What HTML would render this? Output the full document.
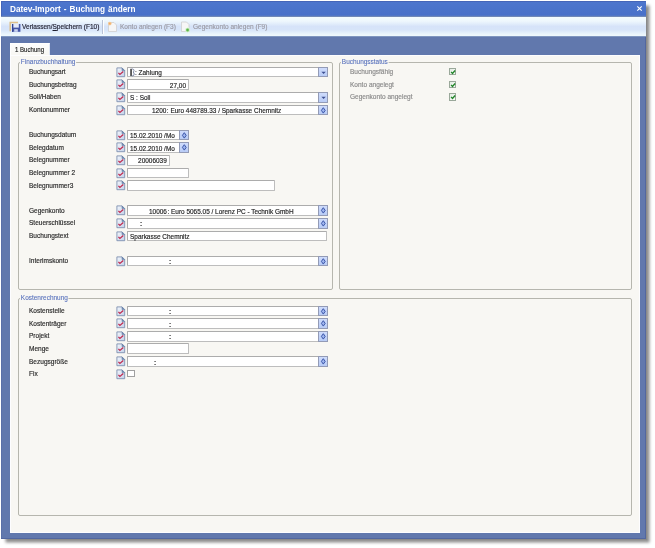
<!DOCTYPE html><html><head><meta charset="utf-8"><style>
html,body{-webkit-font-smoothing:antialiased;margin:0;padding:0;width:655px;height:548px;overflow:hidden;background:#fff;font-family:"Liberation Sans", sans-serif}
#win{position:absolute;left:1px;top:1px;width:645px;height:538px;background:#6178ad;box-shadow:3.5px 3.5px 3px rgba(0,0,0,0.46), inset -1px -1px 0 #52679f, inset 1px 0 0 #5a70a8}
.abs{position:absolute}
.lb{position:absolute;-webkit-text-stroke:0.18px currentColor;font-size:7.6px;transform:scaleX(0.86);transform-origin:0 0;line-height:10px;white-space:nowrap}
.fd{position:absolute;height:10.8px;box-sizing:border-box;border:1px solid #b4b4b4;border-color:#acacac #bdbdbd #bdbdbd #acacac;background:#fff;border-radius:1px}
.ft{position:absolute;-webkit-text-stroke:0.18px currentColor;top:0.6px;font-size:7.6px;transform:scaleX(0.85);transform-origin:0 0;line-height:9px;color:#1e1e1e;white-space:nowrap}
.btn{position:absolute;right:-1px;top:-1px;width:9.8px;height:10.8px;box-sizing:border-box;border:1px solid #939bb6;background:linear-gradient(#cfdcfc,#b9ccf6)}
.grp{position:absolute;box-sizing:border-box;border:1px solid #b6b6ae;border-radius:2px}
.lg{position:absolute;font-size:7.6px;transform:scaleX(0.85);transform-origin:0 0;line-height:9px;color:#5670bc;background:#f8f7f3;-webkit-text-stroke:0.1px currentColor;padding:0 1px;white-space:nowrap}
.cb{position:absolute;width:7.6px;height:7.6px;box-sizing:border-box;border:1px solid #9aa89a;background:linear-gradient(135deg,#e2ebe2,#fafdfa)}
#root{position:absolute;left:0;top:0;width:655px;height:548px;will-change:transform}
</style></head><body><div id="root">
<div id="win"></div>

<div class="abs" style="left:1px;top:1px;width:645px;height:16px;background:linear-gradient(#4d76cd,#4870c9 85%,#5f7fc0);box-shadow:inset 1px 1px 0 #4565b8"></div>
<div class="abs" style="left:1px;top:15.8px;width:645px;height:1.7px;background:#7088b8"></div>
<div class="abs" style="left:9.5px;top:4px;font-size:8.4px;font-weight:bold;color:#fff;line-height:10px;white-space:nowrap;word-spacing:0.8px;transform:scaleX(0.98);transform-origin:0 0">Datev-Import - Buchung ändern</div>
<svg class="abs" style="left:636px;top:5px" width="7" height="7" viewBox="0 0 7 7"><path d="M1.3,1.3 L5.7,5.7 M5.7,1.3 L1.3,5.7" stroke="#fff" stroke-width="1.15"/></svg>
<div class="abs" style="left:1px;top:17.4px;width:645px;height:18.4px;background:linear-gradient(#f3fbfe 0%,#eef7fd 22%,#d6e3f9 50%,#d7e5f9 68%,#eaf5fc 90%,#f0f9fd 100%)"></div>
<div class="abs" style="left:1px;top:35.6px;width:645px;height:1px;background:#7f96c0"></div>
<svg class="abs" style="left:8px;top:20px" width="14" height="14" viewBox="0 0 14 14">
<path d="M2.2,11.2 V2.4 H10" fill="none" stroke="#dfc08a" stroke-width="1.5"/>
<path d="M4,4 H12.4 V11.8 H4 Z" fill="#4657a8"/>
<rect x="5.4" y="4" width="5.4" height="3.6" fill="#e4e9f8"/>
<rect x="6.2" y="9.2" width="3.6" height="2.6" fill="#c9d3ef"/>
<rect x="4" y="4" width="1" height="7.8" fill="#34448f"/></svg>
<div class="lb" style="left:22px;top:22px;color:#1f1f2f">Verlassen/<u style="text-decoration-thickness:0.5px;text-underline-offset:1px">S</u>peichern (F10)</div>
<div class="abs" style="left:102px;top:20px;width:1px;height:14px;background:#b9c3d6"></div>
<div class="abs" style="left:103px;top:20px;width:1px;height:14px;background:#fff"></div>
<svg class="abs" style="left:107px;top:21px" width="11" height="12" viewBox="0 0 11 12">
<path d="M1.5,1.5 H7 L9.5,4 V10.5 H1.5 Z" fill="#f6f6f6" stroke="#cfcfcf" stroke-width="0.8"/>
<circle cx="2.8" cy="2.6" r="1.8" fill="#f6c890"/><circle cx="2.8" cy="2.6" r="0.9" fill="#f0a868"/></svg>
<div class="lb" style="left:119.5px;top:22px;color:#9a9aa4">Konto anlegen (F3)</div>
<svg class="abs" style="left:180px;top:21px" width="11" height="12" viewBox="0 0 11 12">
<path d="M1.5,1 H6.5 L9,3.5 V10.5 H1.5 Z" fill="#f6f6f6" stroke="#cfcfcf" stroke-width="0.8"/>
<circle cx="7.6" cy="9" r="2.2" fill="#8ccf7c" stroke="#f4fff0" stroke-width="0.6"/><circle cx="7.6" cy="9" r="1.1" fill="#58b048"/></svg>
<div class="lb" style="left:193px;top:22px;color:#9a9aa4">Gegenkonto anlegen (F9)</div>
<div class="abs" style="left:10px;top:43px;width:40px;height:13px;box-sizing:border-box;background:linear-gradient(#fdfdfd,#f8f7f3);border-left:1px solid #fff;border-top:1px solid #fff;border-right:1px solid #dfe6f4"></div>
<div class="lb" style="left:15.2px;top:45px;color:#222;transform:scaleX(0.8)">1 Buchung</div>
<div class="abs" style="left:10px;top:55px;width:630px;height:477.5px;box-sizing:border-box;background:#f8f7f3;border:1px solid #fdfdff"></div>
<div class="abs" style="left:10px;top:43px;width:1px;height:13px;background:#fff"></div>
<div class="grp" style="left:18px;top:62px;width:315px;height:228px"></div>
<div class="lg" style="left:20px;top:56.6px">Finanzbuchhaltung</div>
<div class="grp" style="left:339px;top:62px;width:293px;height:228px"></div>
<div class="lg" style="left:341px;top:56.6px">Buchungsstatus</div>
<div class="grp" style="left:18px;top:298px;width:614px;height:217.5px"></div>
<div class="lg" style="left:20px;top:292.6px">Kostenrechnung</div>
<div class="lb" style="left:28.5px;top:67.2px;color:#2a2a2a">Buchungsart</div>
<svg width="10" height="11" viewBox="0 0 10 11" style="position:absolute;left:115.5px;top:66.7px"><defs><linearGradient id="dg1" x1="0" y1="0" x2="1" y2="1"><stop offset="0" stop-color="#f2f6fc"/><stop offset="1" stop-color="#c4d2ea"/></linearGradient></defs><path d="M0.9,0.9 H6 L8.7,3.6 V9.7 H0.9 Z" fill="url(#dg1)" stroke="#7a8cae" stroke-width="0.85"/><path d="M6,0.9 V3.6 H8.7 Z" fill="#7891b6" stroke="#607aa0" stroke-width="0.5"/><path d="M2.4,5.9 L3.9,7.5 L7.3,4.5" fill="none" stroke="#c02c50" stroke-width="1.25"/></svg>
<div class="fd" style="left:127.3px;top:66.7px;width:200.5px"><svg width="6" height="9" viewBox="0 0 6 9" style="position:absolute;left:1.7px;top:0.6px"><rect x="0.4" y="0.8" width="1.3" height="7.2" fill="#111"/><path d="M1.7,1 H2.6 Q4,1.2 4,2.6 Q4,3.8 3,4.2 Q4.2,4.6 4.2,6 Q4.2,7.8 2.6,7.8 H1.7" fill="none" stroke="#6f7c9c" stroke-width="0.9"/></svg><span class="ft" style="left:6.700000000000003px">: Zahlung</span><div class="btn"><svg width="9" height="9" viewBox="0 0 9 9" style="position:absolute;left:0;top:0"><path d="M2.4,3.7 H6.8 L4.6,6 Z" fill="#3c4f92"/></svg></div></div>
<div class="lb" style="left:28.5px;top:79.8px;color:#2a2a2a">Buchungsbetrag</div>
<svg width="10" height="11" viewBox="0 0 10 11" style="position:absolute;left:115.5px;top:79.3px"><defs><linearGradient id="dg2" x1="0" y1="0" x2="1" y2="1"><stop offset="0" stop-color="#f2f6fc"/><stop offset="1" stop-color="#c4d2ea"/></linearGradient></defs><path d="M0.9,0.9 H6 L8.7,3.6 V9.7 H0.9 Z" fill="url(#dg2)" stroke="#7a8cae" stroke-width="0.85"/><path d="M6,0.9 V3.6 H8.7 Z" fill="#7891b6" stroke="#607aa0" stroke-width="0.5"/><path d="M2.4,5.9 L3.9,7.5 L7.3,4.5" fill="none" stroke="#c02c50" stroke-width="1.25"/></svg>
<div class="fd" style="left:127.3px;top:79.3px;width:61.7px"><span class="ft" style="right:2px;transform-origin:100% 0">27,00</span></div>
<div class="lb" style="left:28.5px;top:92.4px;color:#2a2a2a">Soll/Haben</div>
<svg width="10" height="11" viewBox="0 0 10 11" style="position:absolute;left:115.5px;top:91.9px"><defs><linearGradient id="dg3" x1="0" y1="0" x2="1" y2="1"><stop offset="0" stop-color="#f2f6fc"/><stop offset="1" stop-color="#c4d2ea"/></linearGradient></defs><path d="M0.9,0.9 H6 L8.7,3.6 V9.7 H0.9 Z" fill="url(#dg3)" stroke="#7a8cae" stroke-width="0.85"/><path d="M6,0.9 V3.6 H8.7 Z" fill="#7891b6" stroke="#607aa0" stroke-width="0.5"/><path d="M2.4,5.9 L3.9,7.5 L7.3,4.5" fill="none" stroke="#c02c50" stroke-width="1.25"/></svg>
<div class="fd" style="left:127.3px;top:91.9px;width:200.5px"><span class="ft" style="left:2px">S : Soll</span><div class="btn"><svg width="9" height="9" viewBox="0 0 9 9" style="position:absolute;left:0;top:0"><path d="M2.4,3.7 H6.8 L4.6,6 Z" fill="#3c4f92"/></svg></div></div>
<div class="lb" style="left:28.5px;top:105.0px;color:#2a2a2a">Kontonummer</div>
<svg width="10" height="11" viewBox="0 0 10 11" style="position:absolute;left:115.5px;top:104.5px"><defs><linearGradient id="dg4" x1="0" y1="0" x2="1" y2="1"><stop offset="0" stop-color="#f2f6fc"/><stop offset="1" stop-color="#c4d2ea"/></linearGradient></defs><path d="M0.9,0.9 H6 L8.7,3.6 V9.7 H0.9 Z" fill="url(#dg4)" stroke="#7a8cae" stroke-width="0.85"/><path d="M6,0.9 V3.6 H8.7 Z" fill="#7891b6" stroke="#607aa0" stroke-width="0.5"/><path d="M2.4,5.9 L3.9,7.5 L7.3,4.5" fill="none" stroke="#c02c50" stroke-width="1.25"/></svg>
<div class="fd" style="left:127.3px;top:104.5px;width:200.5px"><span class="ft" style="left:24.10000000000001px">1200<span style="margin-left:0.5px">:</span> Euro 448789.33 / Sparkasse Chemnitz</span><div class="btn"><svg width="9" height="9" viewBox="0 0 9 9" style="position:absolute;left:0;top:0"><path d="M4.3,1.7 L6.2,4.4 L4.3,7.1 L2.4,4.4 Z" fill="#9fb5ee" stroke="#3b57aa" stroke-width="1"/></svg></div></div>
<div class="lb" style="left:28.5px;top:130.2px;color:#2a2a2a">Buchungsdatum</div>
<svg width="10" height="11" viewBox="0 0 10 11" style="position:absolute;left:115.5px;top:129.7px"><defs><linearGradient id="dg5" x1="0" y1="0" x2="1" y2="1"><stop offset="0" stop-color="#f2f6fc"/><stop offset="1" stop-color="#c4d2ea"/></linearGradient></defs><path d="M0.9,0.9 H6 L8.7,3.6 V9.7 H0.9 Z" fill="url(#dg5)" stroke="#7a8cae" stroke-width="0.85"/><path d="M6,0.9 V3.6 H8.7 Z" fill="#7891b6" stroke="#607aa0" stroke-width="0.5"/><path d="M2.4,5.9 L3.9,7.5 L7.3,4.5" fill="none" stroke="#c02c50" stroke-width="1.25"/></svg>
<div class="fd" style="left:127.3px;top:129.7px;width:61.39999999999999px"><span class="ft" style="left:2px">15.02.2010 /Mo</span><div class="btn"><svg width="9" height="9" viewBox="0 0 9 9" style="position:absolute;left:0;top:0"><path d="M4.3,1.7 L6.2,4.4 L4.3,7.1 L2.4,4.4 Z" fill="#9fb5ee" stroke="#3b57aa" stroke-width="1"/></svg></div></div>
<div class="lb" style="left:28.5px;top:142.8px;color:#2a2a2a">Belegdatum</div>
<svg width="10" height="11" viewBox="0 0 10 11" style="position:absolute;left:115.5px;top:142.3px"><defs><linearGradient id="dg6" x1="0" y1="0" x2="1" y2="1"><stop offset="0" stop-color="#f2f6fc"/><stop offset="1" stop-color="#c4d2ea"/></linearGradient></defs><path d="M0.9,0.9 H6 L8.7,3.6 V9.7 H0.9 Z" fill="url(#dg6)" stroke="#7a8cae" stroke-width="0.85"/><path d="M6,0.9 V3.6 H8.7 Z" fill="#7891b6" stroke="#607aa0" stroke-width="0.5"/><path d="M2.4,5.9 L3.9,7.5 L7.3,4.5" fill="none" stroke="#c02c50" stroke-width="1.25"/></svg>
<div class="fd" style="left:127.3px;top:142.3px;width:61.39999999999999px"><span class="ft" style="left:2px">15.02.2010 /Mo</span><div class="btn"><svg width="9" height="9" viewBox="0 0 9 9" style="position:absolute;left:0;top:0"><path d="M4.3,1.7 L6.2,4.4 L4.3,7.1 L2.4,4.4 Z" fill="#9fb5ee" stroke="#3b57aa" stroke-width="1"/></svg></div></div>
<div class="lb" style="left:28.5px;top:155.4px;color:#2a2a2a">Belegnummer</div>
<svg width="10" height="11" viewBox="0 0 10 11" style="position:absolute;left:115.5px;top:154.9px"><defs><linearGradient id="dg7" x1="0" y1="0" x2="1" y2="1"><stop offset="0" stop-color="#f2f6fc"/><stop offset="1" stop-color="#c4d2ea"/></linearGradient></defs><path d="M0.9,0.9 H6 L8.7,3.6 V9.7 H0.9 Z" fill="url(#dg7)" stroke="#7a8cae" stroke-width="0.85"/><path d="M6,0.9 V3.6 H8.7 Z" fill="#7891b6" stroke="#607aa0" stroke-width="0.5"/><path d="M2.4,5.9 L3.9,7.5 L7.3,4.5" fill="none" stroke="#c02c50" stroke-width="1.25"/></svg>
<div class="fd" style="left:127.3px;top:154.9px;width:42.500000000000014px"><span class="ft" style="right:2px;transform-origin:100% 0">20006039</span></div>
<div class="lb" style="left:28.5px;top:168.0px;color:#2a2a2a">Belegnummer 2</div>
<svg width="10" height="11" viewBox="0 0 10 11" style="position:absolute;left:115.5px;top:167.5px"><defs><linearGradient id="dg8" x1="0" y1="0" x2="1" y2="1"><stop offset="0" stop-color="#f2f6fc"/><stop offset="1" stop-color="#c4d2ea"/></linearGradient></defs><path d="M0.9,0.9 H6 L8.7,3.6 V9.7 H0.9 Z" fill="url(#dg8)" stroke="#7a8cae" stroke-width="0.85"/><path d="M6,0.9 V3.6 H8.7 Z" fill="#7891b6" stroke="#607aa0" stroke-width="0.5"/><path d="M2.4,5.9 L3.9,7.5 L7.3,4.5" fill="none" stroke="#c02c50" stroke-width="1.25"/></svg>
<div class="fd" style="left:127.3px;top:167.5px;width:61.39999999999999px"></div>
<div class="lb" style="left:28.5px;top:180.6px;color:#2a2a2a">Belegnummer3</div>
<svg width="10" height="11" viewBox="0 0 10 11" style="position:absolute;left:115.5px;top:180.1px"><defs><linearGradient id="dg9" x1="0" y1="0" x2="1" y2="1"><stop offset="0" stop-color="#f2f6fc"/><stop offset="1" stop-color="#c4d2ea"/></linearGradient></defs><path d="M0.9,0.9 H6 L8.7,3.6 V9.7 H0.9 Z" fill="url(#dg9)" stroke="#7a8cae" stroke-width="0.85"/><path d="M6,0.9 V3.6 H8.7 Z" fill="#7891b6" stroke="#607aa0" stroke-width="0.5"/><path d="M2.4,5.9 L3.9,7.5 L7.3,4.5" fill="none" stroke="#c02c50" stroke-width="1.25"/></svg>
<div class="fd" style="left:127.3px;top:180.1px;width:147.7px"></div>
<div class="lb" style="left:28.5px;top:205.8px;color:#2a2a2a">Gegenkonto</div>
<svg width="10" height="11" viewBox="0 0 10 11" style="position:absolute;left:115.5px;top:205.3px"><defs><linearGradient id="dg10" x1="0" y1="0" x2="1" y2="1"><stop offset="0" stop-color="#f2f6fc"/><stop offset="1" stop-color="#c4d2ea"/></linearGradient></defs><path d="M0.9,0.9 H6 L8.7,3.6 V9.7 H0.9 Z" fill="url(#dg10)" stroke="#7a8cae" stroke-width="0.85"/><path d="M6,0.9 V3.6 H8.7 Z" fill="#7891b6" stroke="#607aa0" stroke-width="0.5"/><path d="M2.4,5.9 L3.9,7.5 L7.3,4.5" fill="none" stroke="#c02c50" stroke-width="1.25"/></svg>
<div class="fd" style="left:127.3px;top:205.3px;width:200.5px"><span class="ft" style="left:20.500000000000014px">10006<span style="margin-left:0.5px">:</span> Euro 5065.05 / Lorenz PC - Technik GmbH</span><div class="btn"><svg width="9" height="9" viewBox="0 0 9 9" style="position:absolute;left:0;top:0"><path d="M4.3,1.7 L6.2,4.4 L4.3,7.1 L2.4,4.4 Z" fill="#9fb5ee" stroke="#3b57aa" stroke-width="1"/></svg></div></div>
<div class="lb" style="left:28.5px;top:218.39999999999998px;color:#2a2a2a">Steuerschlüssel</div>
<svg width="10" height="11" viewBox="0 0 10 11" style="position:absolute;left:115.5px;top:217.89999999999998px"><defs><linearGradient id="dg11" x1="0" y1="0" x2="1" y2="1"><stop offset="0" stop-color="#f2f6fc"/><stop offset="1" stop-color="#c4d2ea"/></linearGradient></defs><path d="M0.9,0.9 H6 L8.7,3.6 V9.7 H0.9 Z" fill="url(#dg11)" stroke="#7a8cae" stroke-width="0.85"/><path d="M6,0.9 V3.6 H8.7 Z" fill="#7891b6" stroke="#607aa0" stroke-width="0.5"/><path d="M2.4,5.9 L3.9,7.5 L7.3,4.5" fill="none" stroke="#c02c50" stroke-width="1.25"/></svg>
<div class="fd" style="left:127.3px;top:217.89999999999998px;width:200.5px"><span class="ft" style="left:11.299999999999997px"><b style="font-weight:bold">:</b></span><div class="btn"><svg width="9" height="9" viewBox="0 0 9 9" style="position:absolute;left:0;top:0"><path d="M4.3,1.7 L6.2,4.4 L4.3,7.1 L2.4,4.4 Z" fill="#9fb5ee" stroke="#3b57aa" stroke-width="1"/></svg></div></div>
<div class="lb" style="left:28.5px;top:231.0px;color:#2a2a2a">Buchungstext</div>
<svg width="10" height="11" viewBox="0 0 10 11" style="position:absolute;left:115.5px;top:230.5px"><defs><linearGradient id="dg12" x1="0" y1="0" x2="1" y2="1"><stop offset="0" stop-color="#f2f6fc"/><stop offset="1" stop-color="#c4d2ea"/></linearGradient></defs><path d="M0.9,0.9 H6 L8.7,3.6 V9.7 H0.9 Z" fill="url(#dg12)" stroke="#7a8cae" stroke-width="0.85"/><path d="M6,0.9 V3.6 H8.7 Z" fill="#7891b6" stroke="#607aa0" stroke-width="0.5"/><path d="M2.4,5.9 L3.9,7.5 L7.3,4.5" fill="none" stroke="#c02c50" stroke-width="1.25"/></svg>
<div class="fd" style="left:127.3px;top:230.5px;width:199.7px"><span class="ft" style="left:2px">Sparkasse Chemnitz</span></div>
<div class="lb" style="left:28.5px;top:256.2px;color:#2a2a2a">Interimskonto</div>
<svg width="10" height="11" viewBox="0 0 10 11" style="position:absolute;left:115.5px;top:255.7px"><defs><linearGradient id="dg13" x1="0" y1="0" x2="1" y2="1"><stop offset="0" stop-color="#f2f6fc"/><stop offset="1" stop-color="#c4d2ea"/></linearGradient></defs><path d="M0.9,0.9 H6 L8.7,3.6 V9.7 H0.9 Z" fill="url(#dg13)" stroke="#7a8cae" stroke-width="0.85"/><path d="M6,0.9 V3.6 H8.7 Z" fill="#7891b6" stroke="#607aa0" stroke-width="0.5"/><path d="M2.4,5.9 L3.9,7.5 L7.3,4.5" fill="none" stroke="#c02c50" stroke-width="1.25"/></svg>
<div class="fd" style="left:127.3px;top:255.7px;width:200.5px"><span class="ft" style="left:40.3px"><b style="font-weight:bold">:</b></span><div class="btn"><svg width="9" height="9" viewBox="0 0 9 9" style="position:absolute;left:0;top:0"><path d="M4.3,1.7 L6.2,4.4 L4.3,7.1 L2.4,4.4 Z" fill="#9fb5ee" stroke="#3b57aa" stroke-width="1"/></svg></div></div>
<div class="lb" style="left:350px;top:67.2px;color:#8a8a8a">Buchungsfähig</div>
<div class="cb" style="left:448.8px;top:67.9px"><svg width="6" height="6" viewBox="0 0 6 6" style="position:absolute;left:0;top:0"><path d="M1.1,2.9 L2.5,4.5 L5.1,1.5" fill="none" stroke="#23862a" stroke-width="1.4"/></svg></div>
<div class="lb" style="left:350px;top:79.8px;color:#8a8a8a">Konto angelegt</div>
<div class="cb" style="left:448.8px;top:80.5px"><svg width="6" height="6" viewBox="0 0 6 6" style="position:absolute;left:0;top:0"><path d="M1.1,2.9 L2.5,4.5 L5.1,1.5" fill="none" stroke="#23862a" stroke-width="1.4"/></svg></div>
<div class="lb" style="left:350px;top:92.4px;color:#8a8a8a">Gegenkonto angelegt</div>
<div class="cb" style="left:448.8px;top:93.10000000000001px"><svg width="6" height="6" viewBox="0 0 6 6" style="position:absolute;left:0;top:0"><path d="M1.1,2.9 L2.5,4.5 L5.1,1.5" fill="none" stroke="#23862a" stroke-width="1.4"/></svg></div>
<div class="lb" style="left:28.5px;top:306.1px;color:#2a2a2a">Kostenstelle</div>
<svg width="10" height="11" viewBox="0 0 10 11" style="position:absolute;left:115.5px;top:305.6px"><defs><linearGradient id="dg14" x1="0" y1="0" x2="1" y2="1"><stop offset="0" stop-color="#f2f6fc"/><stop offset="1" stop-color="#c4d2ea"/></linearGradient></defs><path d="M0.9,0.9 H6 L8.7,3.6 V9.7 H0.9 Z" fill="url(#dg14)" stroke="#7a8cae" stroke-width="0.85"/><path d="M6,0.9 V3.6 H8.7 Z" fill="#7891b6" stroke="#607aa0" stroke-width="0.5"/><path d="M2.4,5.9 L3.9,7.5 L7.3,4.5" fill="none" stroke="#c02c50" stroke-width="1.25"/></svg>
<div class="fd" style="left:127.3px;top:305.6px;width:200.5px"><span class="ft" style="left:40.3px"><b style="font-weight:bold">:</b></span><div class="btn"><svg width="9" height="9" viewBox="0 0 9 9" style="position:absolute;left:0;top:0"><path d="M4.3,1.7 L6.2,4.4 L4.3,7.1 L2.4,4.4 Z" fill="#9fb5ee" stroke="#3b57aa" stroke-width="1"/></svg></div></div>
<div class="lb" style="left:28.5px;top:318.70000000000005px;color:#2a2a2a">Kostenträger</div>
<svg width="10" height="11" viewBox="0 0 10 11" style="position:absolute;left:115.5px;top:318.20000000000005px"><defs><linearGradient id="dg15" x1="0" y1="0" x2="1" y2="1"><stop offset="0" stop-color="#f2f6fc"/><stop offset="1" stop-color="#c4d2ea"/></linearGradient></defs><path d="M0.9,0.9 H6 L8.7,3.6 V9.7 H0.9 Z" fill="url(#dg15)" stroke="#7a8cae" stroke-width="0.85"/><path d="M6,0.9 V3.6 H8.7 Z" fill="#7891b6" stroke="#607aa0" stroke-width="0.5"/><path d="M2.4,5.9 L3.9,7.5 L7.3,4.5" fill="none" stroke="#c02c50" stroke-width="1.25"/></svg>
<div class="fd" style="left:127.3px;top:318.20000000000005px;width:200.5px"><span class="ft" style="left:40.3px"><b style="font-weight:bold">:</b></span><div class="btn"><svg width="9" height="9" viewBox="0 0 9 9" style="position:absolute;left:0;top:0"><path d="M4.3,1.7 L6.2,4.4 L4.3,7.1 L2.4,4.4 Z" fill="#9fb5ee" stroke="#3b57aa" stroke-width="1"/></svg></div></div>
<div class="lb" style="left:28.5px;top:331.3px;color:#2a2a2a">Projekt</div>
<svg width="10" height="11" viewBox="0 0 10 11" style="position:absolute;left:115.5px;top:330.8px"><defs><linearGradient id="dg16" x1="0" y1="0" x2="1" y2="1"><stop offset="0" stop-color="#f2f6fc"/><stop offset="1" stop-color="#c4d2ea"/></linearGradient></defs><path d="M0.9,0.9 H6 L8.7,3.6 V9.7 H0.9 Z" fill="url(#dg16)" stroke="#7a8cae" stroke-width="0.85"/><path d="M6,0.9 V3.6 H8.7 Z" fill="#7891b6" stroke="#607aa0" stroke-width="0.5"/><path d="M2.4,5.9 L3.9,7.5 L7.3,4.5" fill="none" stroke="#c02c50" stroke-width="1.25"/></svg>
<div class="fd" style="left:127.3px;top:330.8px;width:200.5px"><span class="ft" style="left:40.3px"><b style="font-weight:bold">:</b></span><div class="btn"><svg width="9" height="9" viewBox="0 0 9 9" style="position:absolute;left:0;top:0"><path d="M4.3,1.7 L6.2,4.4 L4.3,7.1 L2.4,4.4 Z" fill="#9fb5ee" stroke="#3b57aa" stroke-width="1"/></svg></div></div>
<div class="lb" style="left:28.5px;top:343.90000000000003px;color:#2a2a2a">Menge</div>
<svg width="10" height="11" viewBox="0 0 10 11" style="position:absolute;left:115.5px;top:343.40000000000003px"><defs><linearGradient id="dg17" x1="0" y1="0" x2="1" y2="1"><stop offset="0" stop-color="#f2f6fc"/><stop offset="1" stop-color="#c4d2ea"/></linearGradient></defs><path d="M0.9,0.9 H6 L8.7,3.6 V9.7 H0.9 Z" fill="url(#dg17)" stroke="#7a8cae" stroke-width="0.85"/><path d="M6,0.9 V3.6 H8.7 Z" fill="#7891b6" stroke="#607aa0" stroke-width="0.5"/><path d="M2.4,5.9 L3.9,7.5 L7.3,4.5" fill="none" stroke="#c02c50" stroke-width="1.25"/></svg>
<div class="fd" style="left:127.3px;top:343.40000000000003px;width:61.3px"></div>
<div class="lb" style="left:28.5px;top:356.5px;color:#2a2a2a">Bezugsgröße</div>
<svg width="10" height="11" viewBox="0 0 10 11" style="position:absolute;left:115.5px;top:356.0px"><defs><linearGradient id="dg18" x1="0" y1="0" x2="1" y2="1"><stop offset="0" stop-color="#f2f6fc"/><stop offset="1" stop-color="#c4d2ea"/></linearGradient></defs><path d="M0.9,0.9 H6 L8.7,3.6 V9.7 H0.9 Z" fill="url(#dg18)" stroke="#7a8cae" stroke-width="0.85"/><path d="M6,0.9 V3.6 H8.7 Z" fill="#7891b6" stroke="#607aa0" stroke-width="0.5"/><path d="M2.4,5.9 L3.9,7.5 L7.3,4.5" fill="none" stroke="#c02c50" stroke-width="1.25"/></svg>
<div class="fd" style="left:127.3px;top:356.0px;width:200.5px"><span class="ft" style="left:25.799999999999997px"><b style="font-weight:bold">:</b></span><div class="btn"><svg width="9" height="9" viewBox="0 0 9 9" style="position:absolute;left:0;top:0"><path d="M4.3,1.7 L6.2,4.4 L4.3,7.1 L2.4,4.4 Z" fill="#9fb5ee" stroke="#3b57aa" stroke-width="1"/></svg></div></div>
<div class="lb" style="left:28.5px;top:369.1px;color:#2a2a2a">Fix</div>
<svg width="10" height="11" viewBox="0 0 10 11" style="position:absolute;left:115.5px;top:368.6px"><defs><linearGradient id="dg19" x1="0" y1="0" x2="1" y2="1"><stop offset="0" stop-color="#f2f6fc"/><stop offset="1" stop-color="#c4d2ea"/></linearGradient></defs><path d="M0.9,0.9 H6 L8.7,3.6 V9.7 H0.9 Z" fill="url(#dg19)" stroke="#7a8cae" stroke-width="0.85"/><path d="M6,0.9 V3.6 H8.7 Z" fill="#7891b6" stroke="#607aa0" stroke-width="0.5"/><path d="M2.4,5.9 L3.9,7.5 L7.3,4.5" fill="none" stroke="#c02c50" stroke-width="1.25"/></svg>
<div class="cb" style="left:127px;top:369.8px;border-color:#a0a0a0;background:#fff"></div>
</div></body></html>
